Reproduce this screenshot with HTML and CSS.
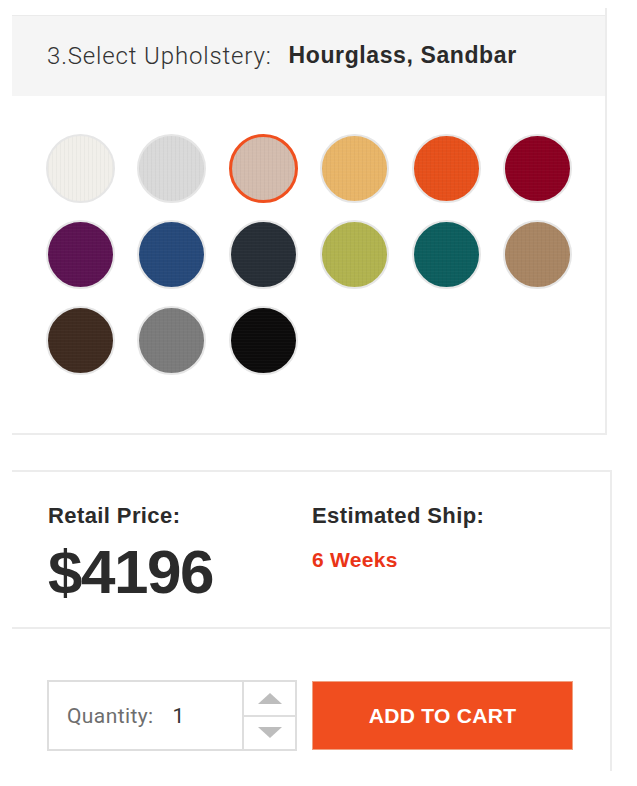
FILE: index.html
```html
<!DOCTYPE html>
<html>
<head>
<meta charset="utf-8">
<link rel="stylesheet" href="styles.css">
</head>
<body>
<div class="upholstery">
  <div class="uph-header">
    <span class="uph-label">3.Select Upholstery:</span>
    <span class="uph-value">Hourglass, Sandbar</span>
  </div>
  <div class="swatches">
    <span class="swatch c-ivory"></span>
    <span class="swatch c-silver"></span>
    <span class="swatch c-sand selected"></span>
    <span class="swatch c-honey"></span>
    <span class="swatch c-orange"></span>
    <span class="swatch c-crimson"></span>
    <span class="swatch c-plum"></span>
    <span class="swatch c-navy"></span>
    <span class="swatch c-slate"></span>
    <span class="swatch c-olive"></span>
    <span class="swatch c-teal"></span>
    <span class="swatch c-camel"></span>
    <span class="swatch c-brown"></span>
    <span class="swatch c-gray"></span>
    <span class="swatch c-black"></span>
  </div>
</div>

<div class="purchase">
  <div class="price-row">
    <div class="price-col">
      <div class="label">Retail Price:</div>
      <div class="price">$4196</div>
    </div>
    <div class="ship-col">
      <div class="label">Estimated Ship:</div>
      <div class="ship">6 Weeks</div>
    </div>
  </div>
  <div class="cart-row">
    <div class="qty">
      <div class="qty-field">
        <span class="qty-label">Quantity:</span>
        <span class="qty-value">1</span>
      </div>
      <div class="qty-steps">
        <span class="step up"><i class="tri-up"></i></span>
        <span class="step down"><i class="tri-down"></i></span>
      </div>
    </div>
    <button class="add-btn">ADD TO CART</button>
  </div>
</div>
</body>
</html>
```

FILE: styles.css
```css
* { box-sizing: border-box; }
html, body { margin: 0; padding: 0; background: #fff; }
body { font-family: "Liberation Sans", Arial, sans-serif; color: #2b2b2b; }

.upholstery {
  margin-left: 12px;
  width: 595px;
  margin-top: 8px;
  padding-top: 7px;
  border-right: 2px solid #ececec;
  border-bottom: 2px solid #ececec;
}
.uph-header {
  height: 81px;
  border-top: 1px solid #ebebeb;
  background: #f5f5f5;
  display: flex;
  align-items: center;
  padding-left: 35px;
  padding-bottom: 1px;
}
.uph-label {
  font-family: Roboto, "Liberation Sans", sans-serif;
  font-weight: 300;
  font-size: 24px;
  letter-spacing: 0.85px;
  color: #333;
}
.uph-value {
  margin-left: 17px;
  font-weight: bold;
  font-size: 23px;
  letter-spacing: 0.6px;
  color: #2a2a2a;
}

.swatches {
  display: grid;
  grid-template-columns: repeat(6, 69px);
  column-gap: 22.4px;
  row-gap: 17px;
  padding: 38px 0 58px 34px;
}
.swatch {
  display: block;
  width: 69px;
  height: 69px;
  border-radius: 50%;
  border: 2px solid #e6e6e6;
  background-image:
    repeating-linear-gradient(0deg, rgba(255,255,255,0.025) 0 1px, transparent 1px 3px),
    repeating-linear-gradient(90deg, rgba(0,0,0,0.03) 0 1px, transparent 1px 4px);
}
.swatch.selected { border: 3px solid #f0501f; }
.c-ivory  { background-color: #f1efea; }
.c-silver { background-color: #d9d9d9; }
.c-sand   { background-color: #d3bcae; }
.c-honey  { background-color: #e8b568; }
.c-orange { background-color: #e6501b; }
.c-crimson{ background-color: #8b0021; }
.c-plum   { background-color: #5c1352; }
.c-navy   { background-color: #26497a; }
.c-slate  { background-color: #272e36; }
.c-olive  { background-color: #b1b34f; }
.c-teal   { background-color: #0d5e5e; }
.c-camel  { background-color: #a88563; }
.c-brown  { background-color: #3f2b20; }
.c-gray   { background-color: #7b7b7b; }
.c-black  { background-color: #0c0b0b; }

.purchase {
  margin-left: 12px;
  margin-top: 35px;
  width: 600px;
  border-top: 2px solid #ececec;
  border-right: 2px solid #ececec;
}
.price-row {
  display: flex;
  padding: 32px 0 0 36px;
  height: 157px;
  border-bottom: 2px solid #ececec;
}
.price-col { width: 264px; }
.label {
  font-weight: bold;
  font-size: 22px;
  letter-spacing: 0.4px;
  color: #2b2b2b;
  line-height: 24px;
}
.price {
  font-weight: bold;
  font-size: 62px;
  line-height: 62px;
  margin-top: 13px;
  letter-spacing: -1.5px;
  color: #2b2b2b;
}
.ship {
  font-weight: bold;
  font-size: 21px;
  line-height: 24px;
  margin-top: 20px;
  letter-spacing: 0.3px;
  color: #ea3417;
}

.cart-row {
  display: flex;
  gap: 15px;
  padding: 51px 0 20px 35px;
}
.qty {
  display: flex;
  width: 250px;
  height: 71px;
  border: 2px solid #dedede;
}
.qty-field {
  flex: 1;
  display: flex;
  align-items: center;
  padding-left: 18px;
  border-right: 2px solid #dedede;
}
.qty-label {
  font-family: Roboto, "Liberation Sans", sans-serif;
  font-size: 21px;
  letter-spacing: 0.4px;
  color: #6e6e6e;
}
.qty-value {
  margin-left: 19px;
  font-family: Roboto, "Liberation Sans", sans-serif;
  font-size: 21px;
  color: #333;
}
.qty-steps {
  width: 51px;
  display: flex;
  flex-direction: column;
}
.step {
  flex: 1;
  display: flex;
  align-items: center;
  justify-content: center;
}
.step.up { border-bottom: 2px solid #dedede; }
.tri-up {
  width: 0; height: 0;
  border-left: 12px solid transparent;
  border-right: 12px solid transparent;
  border-bottom: 11px solid #bdbdbd;
}
.tri-down {
  width: 0; height: 0;
  border-left: 12px solid transparent;
  border-right: 12px solid transparent;
  border-top: 11px solid #bdbdbd;
}
.add-btn {
  width: 261px;
  height: 69px;
  margin-top: 1px;
  border: 1px solid #f0a080;
  background: #f04e1f;
  color: #fff;
  font-family: "Liberation Sans", Arial, sans-serif;
  font-weight: bold;
  font-size: 21px;
  letter-spacing: 0.3px;
  padding: 0;
}
```
